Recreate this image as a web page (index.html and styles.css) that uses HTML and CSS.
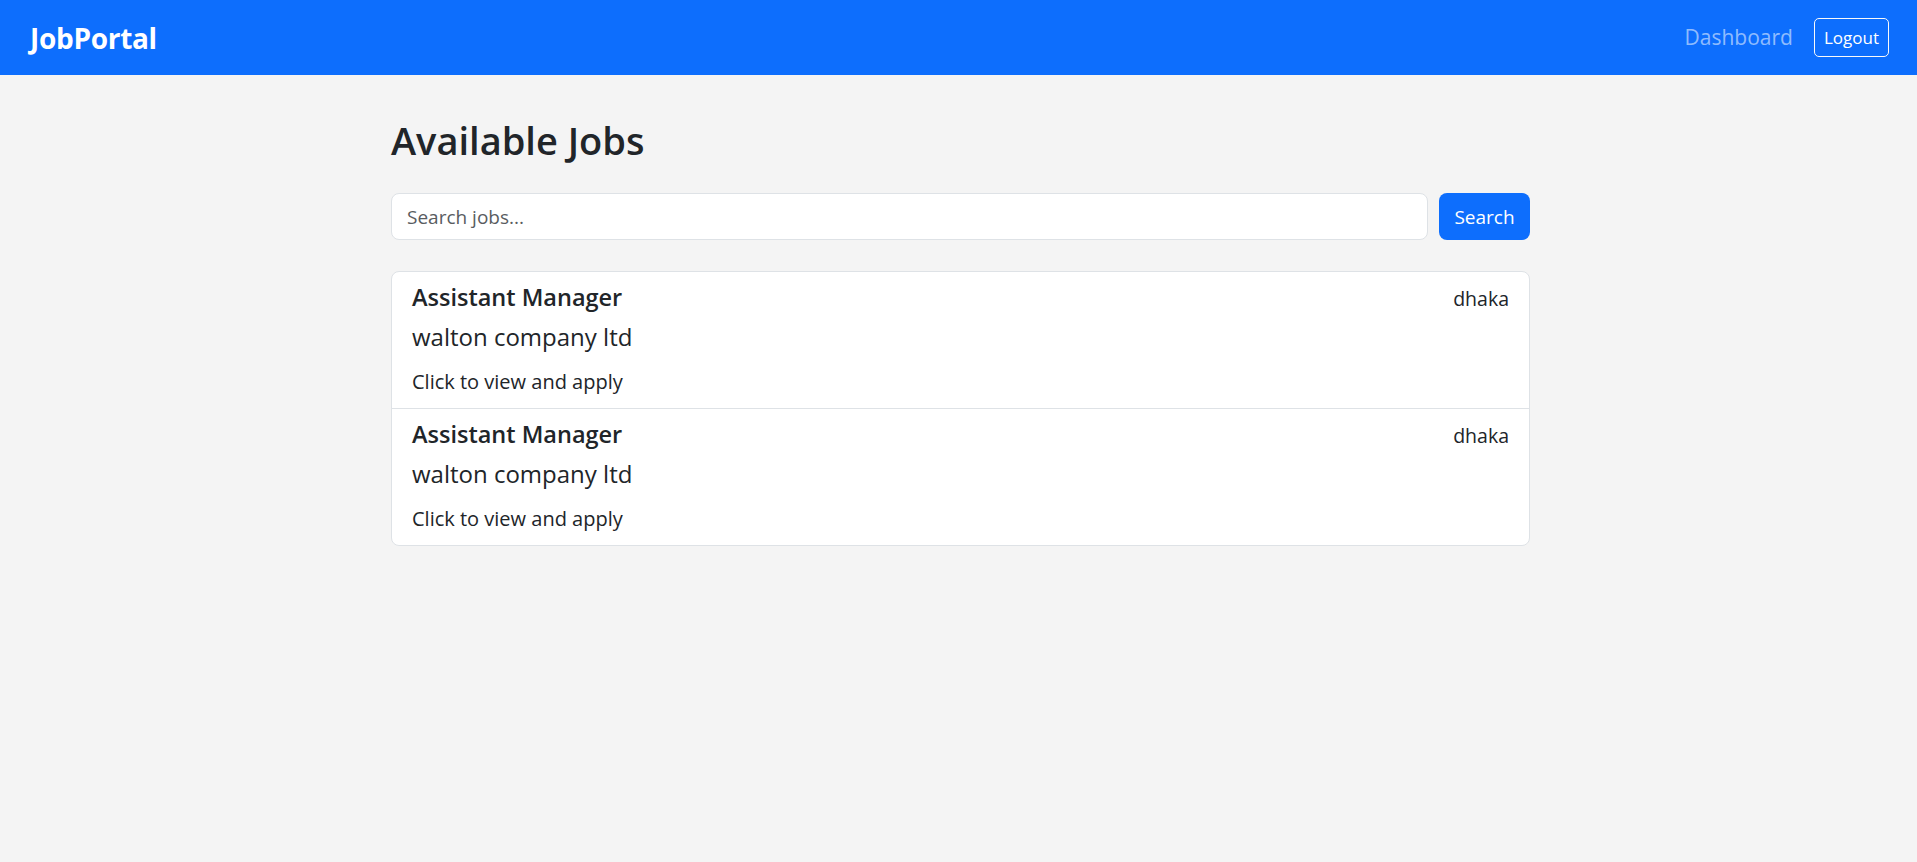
FILE: index.html
```html
<!DOCTYPE html>
<html lang="en">
<head>
<meta charset="utf-8">
<title>JobPortal</title>
<link rel="stylesheet" href="styles.css">
</head>
<body>
<nav class="navbar">
  <a class="brand" href="#">JobPortal</a>
  <div class="nav-right">
    <a class="nav-link" href="#">Dashboard</a>
    <button class="btn-logout" type="button">Logout</button>
  </div>
</nav>
<main class="container">
  <h2 class="page-title">Available Jobs</h2>
  <form class="search-row">
    <input class="search-input" type="text" placeholder="Search jobs...">
    <button class="btn-search" type="button">Search</button>
  </form>
  <div class="job-list">
    <a class="job-item" href="#">
      <div class="job-head">
        <h5 class="job-title">Assistant Manager</h5>
        <small class="job-loc">dhaka</small>
      </div>
      <p class="job-company">walton company ltd</p>
      <p class="job-cta">Click to view and apply</p>
    </a>
    <a class="job-item" href="#">
      <div class="job-head">
        <h5 class="job-title">Assistant Manager</h5>
        <small class="job-loc">dhaka</small>
      </div>
      <p class="job-company">walton company ltd</p>
      <p class="job-cta">Click to view and apply</p>
    </a>
  </div>
</main>
</body>
</html>
```
FILE: styles.css
```css
* { box-sizing: border-box; }
html, body { margin: 0; padding: 0; }
body {
  background: #f4f4f4;
  color: #212529;
  font-family: "Open Sans", "Noto Sans", sans-serif;
  font-size: 20px;
  line-height: 1.5;
}
.navbar {
  height: 75px;
  background: #0d6efd;
  display: flex;
  align-items: center;
  justify-content: space-between;
  padding: 0 28px 0 30px;
}
.brand {
  color: #fff;
  text-decoration: none;
  font-weight: 700;
  font-size: 28px;
  letter-spacing: -0.3px;
}
.nav-right {
  display: flex;
  align-items: center;
  gap: 21px;
}
.nav-link {
  color: rgba(255, 255, 255, 0.55);
  text-decoration: none;
  font-size: 21px;
}
.btn-logout {
  font-family: inherit;
  font-size: 17px;
  color: #fff;
  background: transparent;
  border: 1px solid #f8f9fa;
  border-radius: 5px;
  height: 39px;
  padding: 0 9px;
  line-height: 1;
}
.container {
  width: 1143px;
  margin: 0 auto;
  padding: 41px 0 0 4px;
}
.page-title {
  margin: 0 0 29px;
  font-size: 38px;
  font-weight: 600;
  line-height: 48px;
}
.search-row {
  display: flex;
  gap: 11px;
  margin: 0 0 30px;
  height: 48px;
}
.search-input {
  flex: 1;
  height: 47px;
  border: 1px solid #dee2e6;
  border-radius: 8px;
  background: #fff;
  padding: 0 15px;
  font-family: inherit;
  font-size: 19px;
  color: #212529;
}
.search-input::placeholder { color: #595c5f; }
.btn-search {
  height: 47px;
  width: 91px;
  border: none;
  border-radius: 8px;
  background: #0d6efd;
  color: #fff;
  font-family: inherit;
  font-size: 19px;
  padding: 0;
}
.job-list {
  background: #fff;
  border: 1px solid #dee2e6;
  border-radius: 8px;
  display: flex;
  flex-direction: column;
}
.job-item {
  display: block;
  color: #212529;
  text-decoration: none;
  padding: 11px 20px 11px;
}
.job-item + .job-item { border-top: 1px solid #dee2e6; }
.job-head {
  display: flex;
  justify-content: space-between;
  align-items: baseline;
  height: 29px;
  margin-bottom: 7px;
}
.job-title {
  margin: 0;
  font-size: 23.5px;
  font-weight: 600;
  line-height: 29px;
}
.job-loc { font-size: 19.5px; line-height: 29px; }
.job-company {
  margin: 0 0 12px;
  height: 36px;
  font-size: 24px;
  line-height: 36px;
}
.job-cta {
  margin: 0;
  height: 30px;
  font-size: 20px;
  line-height: 30px;
}
```
